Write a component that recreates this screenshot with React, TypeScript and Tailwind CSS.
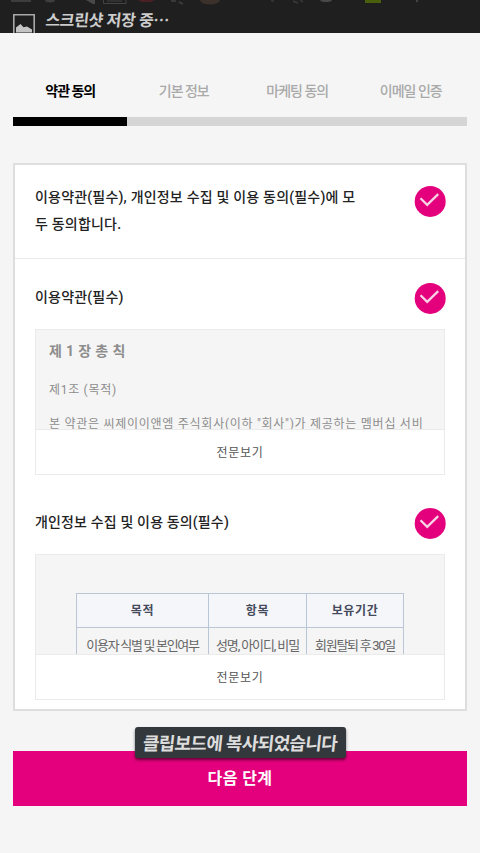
import React from 'react';

const steps = ['약관 동의', '기본 정보', '마케팅 동의', '이메일 인증'];

function CheckIcon() {
  return (
    <svg width="32" height="32" viewBox="0 0 32 32" fill="none" className="shrink-0">
      <circle cx="16.200" cy="16.400" r="15.500" fill="#e4007c" />
      <path d="M6.500 13.200 L13.200 19.800 L24.200 9.200" stroke="#f8d3e6" strokeWidth="2.300" />
    </svg>
  );
}

function StatusBar() {
  return (
    <header className="relative h-[33px] shrink-0 overflow-hidden bg-[#1f1f1f]">
      {/* old icons scrolling out of the bar */}
      <svg width="480" height="6" className="absolute left-0 top-0">
        <rect x="11" y="0" width="20" height="2" fill="#3d3d3d" />
        <ellipse cx="50" cy="0" rx="5" ry="2.5" fill="#3d3d3d" />
        <path d="M86 0 h9 v4 h-2 z" fill="#484848" />
        <path d="M103.500 0 v3.500 h22.500 v-3.500 M107 1 h15" stroke="#434343" fill="none" />
        <path d="M138 0 h17 l-4 2 h-9 z" fill="#4a2025" />
        <path d="M171 1 h5 M179 2 l4 2" stroke="#383838" strokeWidth="2" />
        <ellipse cx="210" cy="0" rx="10" ry="4.500" fill="#3c302a" />
        <path d="M271 0 l3 1 M293 1 l5 2 M300 0 l3 2" stroke="#353535" strokeWidth="2" />
        <ellipse cx="326" cy="0" rx="6" ry="2" fill="#484848" />
        <rect x="365" y="0" width="16" height="3" fill="#4a5f0b" />
        <rect x="416" y="0" width="2" height="2" fill="#444444" />
      </svg>
      <div className="flex pl-[13px] pt-[7px]">
        <svg width="22" height="30" viewBox="0 0 22 30" fill="none" className="mt-[7px] shrink-0">
          <path d="M0.800 20 V0.800 H21.200 V20" stroke="#a8a8a8" strokeWidth="1.6" />
          <path d="M3 18.500 V13.500 L7.500 10 L10.500 13.200 L14 12.500 L19 15.500 V18.500 Z" fill="#c4c4c4" />
        </svg>
        <span className="ml-[10px] -skew-x-6 whitespace-nowrap text-[16px] font-bold leading-[27px] tracking-[-0.35px] text-[#cccccc]">
          스크린샷 저장 중⋯
        </span>
      </div>
    </header>
  );
}

function ViewAll() {
  return (
    <button className="h-[45px] w-full border-t border-[#ebebeb] bg-white pt-px text-[12px] tracking-[0.7px] text-[#555555]">
      전문보기
    </button>
  );
}

export default function App() {
  return (
    <div className="relative flex h-[853px] w-[480px] flex-col overflow-hidden bg-[#f5f5f5] font-['Roboto','Noto_Sans_CJK_KR',sans-serif]">
      <StatusBar />

      <nav className="mx-[13px] mt-[46px]">
        <ul className="grid grid-cols-4">
          {steps.map((step, i) => (
            <li
              key={step}
              className={`h-[38px] whitespace-nowrap pl-px text-center text-[14px] leading-[25px] tracking-[-1px] ${i === 0 ? 'font-bold text-black' : 'font-medium text-[#a9a9a9]'}`}
            >
              {step}
            </li>
          ))}
        </ul>
        <div className="h-[9px] bg-[#d5d5d5]">
          <div className="h-full w-1/4 bg-black" />
        </div>
      </nav>

      <main className="mx-[13px] mt-[37px] h-[548px] border-2 border-[#dedede] bg-white">
        <label className="flex h-[94px] items-start justify-between border-b border-[#ebebeb] pl-5 pr-[19px] pt-5">
          <span className="-mt-px w-[340px] text-[14px] font-medium leading-[26.5px] tracking-[0.2px] text-[#222222]">
            이용약관(필수), 개인정보 수집 및 이용 동의(필수)에 모<br />두 동의합니다.
          </span>
          <CheckIcon />
        </label>

        <section className="pl-5 pr-5">
          <div className="-mr-px flex h-[70px] items-start justify-between pt-[23px]">
            <h2 className="text-[14px] font-medium leading-[30px] tracking-[0.2px] text-[#222222]">이용약관(필수)</h2>
            <CheckIcon />
          </div>
          <div className="h-[146px] border border-[#ebebeb]">
            <div className="h-[99px] overflow-hidden whitespace-nowrap bg-[#f5f5f5] pl-[13px] text-[#8d8d8d]">
              <h3 className="pt-[11px] text-[14px] font-bold leading-[21px] tracking-[0.35px]">제 1 장 총 칙</h3>
              <p className="mt-[18px] text-[12px] leading-[20px] tracking-[0.7px]">제1조 (목적)</p>
              <p className="mt-[14px] text-[12px] leading-[20px] tracking-[0.73px]">
                본 약관은 씨제이이앤엠 주식회사(이하 "회사")가 제공하는 멤버십 서비
              </p>
            </div>
            <ViewAll />
          </div>
        </section>

        <section className="mt-[9px] pl-5 pr-5">
          <div className="-mr-px flex h-[70px] items-start justify-between pt-[23px]">
            <h2 className="text-[14px] font-medium leading-[30px] tracking-[0.15px] text-[#222222]">
              개인정보 수집 및 이용 동의(필수)
            </h2>
            <CheckIcon />
          </div>
          <div className="h-[146px] border border-[#ebebeb]">
            <div className="h-[99px] overflow-hidden bg-[#f5f5f5] pl-[40px] pt-[38px]">
              <table className="w-[328px] table-fixed border-collapse whitespace-nowrap text-center">
                <thead>
                  <tr className="h-[34px] bg-[#f5f6f9] text-[12px] font-bold tracking-[0.6px] text-[#444a5c]">
                    <th className="w-[132px] border border-[#b9c6d6] p-0">목적</th>
                    <th className="w-[98px] border border-[#b9c6d6] p-0">항목</th>
                    <th className="w-[97px] border border-[#b9c6d6] p-0">보유기간</th>
                  </tr>
                </thead>
                <tbody>
                  <tr className="h-[37px] text-[13px] tracking-[-1.3px] text-[#666666]">
                    <td className="border border-[#b9c6d6] p-0">이용자 식별 및 본인여부</td>
                    <td className="border border-[#b9c6d6] p-0 tracking-[-1.1px]">성명, 아이디, 비밀</td>
                    <td className="border border-[#b9c6d6] p-0">회원탈퇴 후 30일</td>
                  </tr>
                </tbody>
              </table>
            </div>
            <ViewAll />
          </div>
        </section>
      </main>

      <button className="mx-[13px] mt-[40px] h-[55px] shrink-0 bg-[#e4007c] text-[16px] font-bold leading-[55px] tracking-[0.4px] text-white">
        다음 단계
      </button>

      {/* toast */}
      <div className="absolute left-[134.500px] top-[727px] flex h-[31px] w-[211px] items-center justify-center rounded-[3px] bg-[#32383c] shadow-[0_2px_3px_rgba(0,0,0,0.55)]">
        <span className="-skew-x-6 whitespace-nowrap pt-px text-[18px] font-bold tracking-[-0.7px] text-[#dddddd]">클립보드에 복사되었습니다</span>
      </div>
    </div>
  );
}
